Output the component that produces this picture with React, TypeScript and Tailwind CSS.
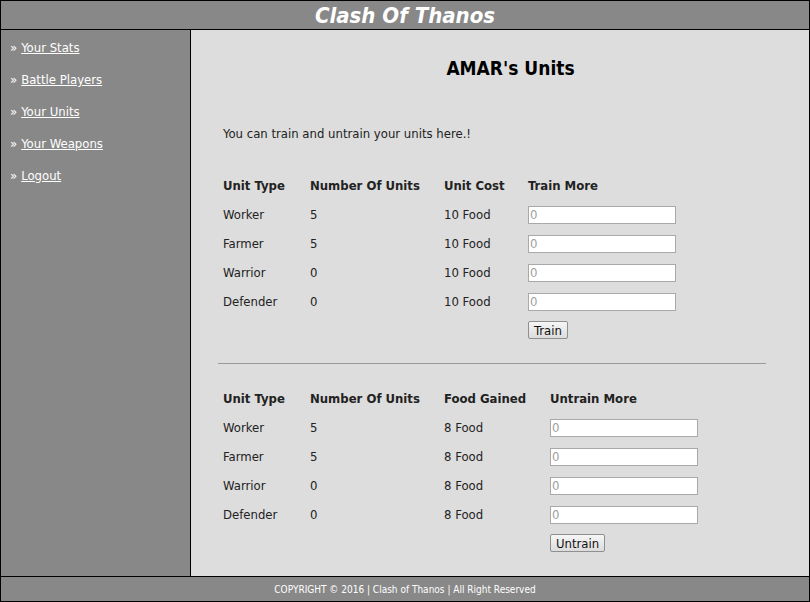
const trainRows = [
  { type: 'Worker', count: 5 },
  { type: 'Farmer', count: 5 },
  { type: 'Warrior', count: 0 },
  { type: 'Defender', count: 0 },
];

const links = ['Your Stats', 'Battle Players', 'Your Units', 'Your Weapons', 'Logout'];

function UnitTable({
  costLabel,
  cost,
  actionLabel,
  button,
  lastCol,
}: {
  costLabel: string;
  cost: string;
  actionLabel: string;
  button: string;
  lastCol: string;
}) {
  return (
    <table className="border-separate border-spacing-0 text-[13px] text-[#222]">
      <thead>
        <tr className="h-[29px] text-left">
          <th className="w-[87px] p-0 font-bold">Unit Type</th>
          <th className="w-[134px] p-0 font-bold">Number Of Units</th>
          <th className={`${lastCol} p-0 font-bold`}>{costLabel}</th>
          <th className="p-0 font-bold">{actionLabel}</th>
        </tr>
      </thead>
      <tbody>
        {trainRows.map((r) => (
          <tr key={r.type} className="h-[29px]">
            <td className="p-0">{r.type}</td>
            <td className="p-0">{r.count}</td>
            <td className="p-0">{cost}</td>
            <td className="p-0">
              <input
                placeholder="0"
                className="block h-[18px] w-[148px] border border-[#a9a9a9] bg-white px-[1px] text-[13px] placeholder:text-[#a0a0a0]"
              />
            </td>
          </tr>
        ))}
        <tr className="h-[29px]">
          <td colSpan={3} />
          <td className="p-0">
            <button className="h-[18px] border border-[#8f8f8f] bg-gradient-to-b from-[#f6f6f6] to-[#dcdcdc] px-[5px] text-[13px] leading-none text-[#111] rounded-[2px]">
              {button}
            </button>
          </td>
        </tr>
      </tbody>
    </table>
  );
}

export default function App() {
  return (
    <div
      className="flex h-[602px] w-[810px] flex-col border border-black bg-[#dddddd]"
      style={{ fontFamily: '"DejaVu Sans Condensed", "DejaVu Sans", sans-serif' }}
    >
      <header className="flex h-[29px] shrink-0 items-center justify-center border-b border-black bg-[#888888]">
        <h1 className="text-[22px] font-bold italic text-white">Clash Of Thanos</h1>
      </header>

      <div className="flex flex-1">
        <nav className="w-[190px] shrink-0 border-r border-black bg-[#888888] pt-[2px] pl-[9px]">
          <ul className="flex flex-col text-[13px] text-white">
            {links.map((l) => (
              <li key={l} className="flex h-[32px] items-center">
                <span className="mr-[4px]">»</span>
                <a href="#" className="underline">
                  {l}
                </a>
              </li>
            ))}
          </ul>
        </nav>

        <main className="flex-1 pl-[32px] pr-[43px] pt-[24px]">
          <h2 className="pl-[32px] text-center text-[19px] font-bold text-black">AMAR's Units</h2>
          <p className="mt-[41px] text-[13px] text-[#222]">You can train and untrain your units here.!</p>

          <div className="mt-[28px]">
            <UnitTable costLabel="Unit Cost" cost="10 Food" actionLabel="Train More" button="Train" lastCol="w-[84px]" />
          </div>

          <hr className="mt-[18px] ml-[-5px] border-t border-[#9a9a9a]" />

          <div className="mt-[20px]">
            <UnitTable costLabel="Food Gained" cost="8 Food" actionLabel="Untrain More" button="Untrain" lastCol="w-[106px]" />
          </div>
        </main>
      </div>

      <footer className="flex h-[25px] shrink-0 items-center justify-center border-t border-black bg-[#888888] text-[10px] text-white">
        COPYRIGHT © 2016 | Clash of Thanos | All Right Reserved
      </footer>
    </div>
  );
}
